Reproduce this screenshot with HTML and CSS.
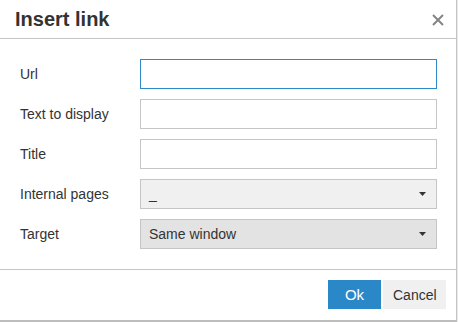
FILE: index.html
```html
<!DOCTYPE html>
<html lang="en">

<head>
    <meta charset="UTF-8">
    <meta name="viewport" content="width=device-width, initial-scale=1.0">
    <title>Insert link</title>
    <link rel="stylesheet" href="styles.css">
</head>

<body>
    <div class="dialog">
        <header class="dialog-head">
            <h1>Insert link</h1>
            <span class="close">
                <svg width="12" height="12" viewBox="0 0 12 12">
                    <path d="M1 1 L11 11 M11 1 L1 11" stroke="#858585" stroke-width="2" fill="none" />
                </svg>
            </span>
        </header>

        <form class="dialog-body">
            <label for="url">Url</label>
            <input type="text" id="url" class="field focused">

            <label for="text">Text to display</label>
            <input type="text" id="text" class="field">

            <label for="title">Title</label>
            <input type="text" id="title" class="field">

            <label>Internal pages</label>
            <div class="select">
                <span>_</span>
                <svg class="caret" width="7" height="4" viewBox="0 0 7 4"><path d="M0 0 H7 L3.5 4 Z" fill="#333" /></svg>
            </div>

            <label>Target</label>
            <div class="select active">
                <span>Same window</span>
                <svg class="caret" width="7" height="4" viewBox="0 0 7 4"><path d="M0 0 H7 L3.5 4 Z" fill="#333" /></svg>
            </div>
        </form>

        <footer class="dialog-foot">
            <button class="btn primary">Ok</button>
            <button class="btn">Cancel</button>
        </footer>
    </div>
</body>

</html>
```

FILE: styles.css
```css
body {
    font-family: "Liberation Sans", Arial, sans-serif;
    margin: 0;
    padding: 0;
    background-color: #e9e9e9;
    color: #333;
}

.dialog {
    box-sizing: border-box;
    width: 457px;
    height: 322px;
    background-color: white;
    border-right: 1px solid #c5c5c5;
    border-bottom: 2px solid #bdbdbd;
}

.dialog-head {
    height: 38px;
    border-bottom: 1px solid #c5c5c5;
    display: flex;
    align-items: center;
    justify-content: space-between;
    padding: 0 12px 0 15px;
}

.dialog-head h1 {
    margin: 0;
    font-size: 20px;
    font-weight: bold;
    color: #333;
}

.close {
    display: flex;
    width: 12px;
    height: 12px;
    margin-top: 1px;
}

.dialog-body {
    display: grid;
    grid-template-columns: 120px 297px;
    grid-auto-rows: 30px;
    row-gap: 10px;
    padding: 20px 20px 20px 20px;
    margin: 0;
    border-bottom: 1px solid #c5c5c5;
}

.dialog-body label {
    display: flex;
    align-items: center;
    font-size: 14px;
}

.field {
    box-sizing: border-box;
    height: 30px;
    width: 297px;
    margin: 0;
    border: 1px solid #c5c5c5;
    background-color: white;
    font-family: inherit;
    font-size: 14px;
    outline: none;
}

.field.focused {
    border-color: #2d8ac7;
}

.select {
    box-sizing: border-box;
    height: 30px;
    border: 1px solid #c5c5c5;
    background-color: #f0f0f0;
    display: flex;
    align-items: center;
    justify-content: space-between;
    padding: 0 10px 0 8px;
    font-size: 14px;
}

.select.active {
    background-color: #e3e3e3;
}

.dialog-foot {
    height: 50px;
    display: flex;
    justify-content: flex-end;
    align-items: flex-start;
    gap: 2px;
    padding: 10px 10px 0 0;
    box-sizing: border-box;
}

.btn {
    height: 29px;
    border: none;
    background-color: #f0f0f0;
    color: #333;
    font-family: inherit;
    font-size: 14px;
    padding: 0 10px;
    width: 63px;
    cursor: pointer;
}

.btn.primary {
    background-color: #2b88c8;
    color: white;
    font-size: 15px;
    width: 53px;
}
```
